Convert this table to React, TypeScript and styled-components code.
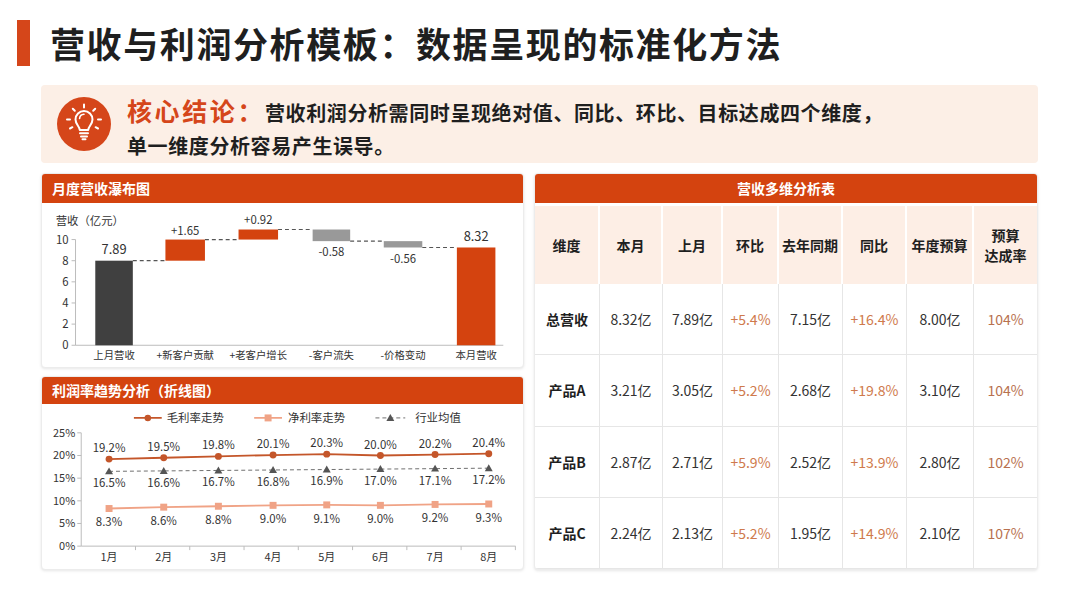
import React from "react"
import styled, { createGlobalStyle } from "styled-components"

const colors = {
  brand: "#d5461a",
  bar: "#d4430f",
  ink: "#1f1f1f",
  text: "#333333",
  peach: "#fcefe6",
  headPeach: "#fdeee5",
  line: "#e6e6e6",
  up: "#cf7a4c",
  rate: "#b8714f",
  gross: "#c4562a",
  net: "#f0a386",
  avg: "#6f6f6f",
}

const font = `"Noto Sans CJK SC", "Noto Sans", sans-serif`

const GlobalStyle = createGlobalStyle`
  * { box-sizing: border-box; }
  html, body { margin: 0; padding: 0; background: #fff; }
  body { font-family: ${font}; color: ${colors.ink}; }
`

const Page = styled.div`
  width: 1080px;
  height: 608px;
  overflow: hidden;
  padding-top: 20px;
  background: #fff;
`

const TitleRow = styled.header`
  display: flex;
  align-items: center;
  height: 46px;
  padding-left: 17px;
`

const TitleMark = styled.div`
  width: 13px;
  height: 46px;
  background: ${colors.brand};
`

const Title = styled.h1`
  margin: 0 0 0 20px;
  font-size: 35px;
  font-weight: 700;
  letter-spacing: 1.6px;
  color: ${colors.ink};
  line-height: 46px;
`

const Content = styled.main`
  padding: 19px 42px 0 41px;
`

const Callout = styled.div`
  display: flex;
  align-items: center;
  height: 78px;
  padding-left: 16px;
  background: ${colors.peach};
  border-radius: 4px;
`

const CalloutText = styled.p`
  margin: 0 0 0 16px;
  padding-top: 8px;
  font-size: 20px;
  font-weight: 700;
  line-height: 33px;
  letter-spacing: 0.6px;
  color: ${colors.ink};
`

const CalloutLead = styled.span`
  font-size: 25px;
  color: ${colors.brand};
  letter-spacing: 2.6px;
`

const Panels = styled.div`
  display: grid;
  grid-template-columns: 483px 1fr;
  gap: 10px;
  margin-top: 10px;
`

const Column = styled.div`
  display: flex;
  flex-direction: column;
  gap: 8px;
`

const Card = styled.section<{ $height: number }>`
  display: flex;
  flex-direction: column;
  height: ${(p) => p.$height}px;
  background: #fff;
  border: 1px solid #ececec;
  border-radius: 4px;
  box-shadow: 0 1px 3px rgba(0, 0, 0, 0.1);
  overflow: hidden;
`

const CardHeader = styled.h2<{ $center?: boolean; $height?: number }>`
  margin: 0;
  flex: none;
  height: ${(p) => p.$height ?? 28}px;
  line-height: ${(p) => p.$height ?? 28}px;
  padding: 0 10px;
  background: ${colors.bar};
  color: #fff;
  font-size: 14px;
  font-weight: 700;
  text-align: ${(p) => (p.$center ? "center" : "left")};
`

const ChartSvg = styled.svg`
  display: block;
  flex: 1;
  font-family: ${font};
`

const Table = styled.div`
  display: grid;
  grid-template-columns: 65px 63px 60px 56px 64px 64px 67px 1fr;
  grid-template-rows: 78px repeat(4, 1fr);
  flex: 1;
  margin-top: 3px;
`

const HeadCell = styled.div`
  display: flex;
  align-items: center;
  justify-content: center;
  text-align: center;
  background: ${colors.headPeach};
  border-right: 2px solid #fff;
  font-size: 14px;
  font-weight: 700;
  line-height: 20px;
  color: ${colors.ink};
  &:nth-child(8) { border-right: none; }
`

const Cell = styled.div<{ $tone?: "label" | "up" | "rate" }>`
  display: flex;
  align-items: center;
  justify-content: center;
  border-right: 1px solid ${colors.line};
  border-bottom: 1px solid ${colors.line};
  font-size: 14px;
  font-weight: ${(p) => (p.$tone === "label" ? 700 : 400)};
  color: ${(p) =>
    p.$tone === "up" ? colors.up : p.$tone === "rate" ? colors.rate : p.$tone === "label" ? colors.ink : colors.text};
  &:nth-child(8n) { border-right: none; }
`

const Bulb = () => (
  <svg width="54" height="54" viewBox="0 0 54 54">
    <circle cx="27" cy="27" r="27" fill={colors.brand} />
    <g fill="none" stroke="#fff" strokeWidth="2" strokeLinecap="round" strokeLinejoin="round">
      <path d="M22.8 33 C22.8 29.5 18.5 27.5 18.5 22.5 A8.5 8.5 0 0 1 35.5 22.5 C35.5 27.5 31.2 29.5 31.2 33 Z" />
      <path d="M23 36.2 H31 M24 39.4 H30 M25.5 42.2 H28.5" />
      <path d="M22.6 21.5 A4.6 4.6 0 0 1 27 17.2" strokeWidth="1.6" />
      <path d="M27 7.5 V10.5 M15.8 11.8 L17.8 13.8 M38.2 11.8 L36.2 13.8 M10 22.5 H13 M41 22.5 H44 M13 31.5 L15.4 30.2 M41 31.5 L38.6 30.2" />
    </g>
  </svg>
)

// ---- waterfall ----
const wf = {
  axisX: 31,
  base: 144,
  unit: 10.7,
}
const wy = (v: number) => wf.base - v * wf.unit

const wfBars = [
  { name: "上月营收", x: 51, w: 38, from: 0, to: 8, fill: "#404040", label: "7.89", ly: 52, big: true },
  { name: "+新客户贡献", x: 122, w: 40, from: 8, to: 10, fill: colors.bar, label: "+1.65", ly: 32 },
  { name: "+老客户增长", x: 196, w: 40, from: 10, to: 10.95, fill: colors.bar, label: "+0.92", ly: 21 },
  { name: "-客户流失", x: 271, w: 38, from: 9.85, to: 10.95, fill: "#999999", label: "-0.58", ly: 54 },
  { name: "-价格变动", x: 343, w: 39, from: 9.25, to: 9.85, fill: "#999999", label: "-0.56", ly: 61 },
  { name: "本月营收", x: 417, w: 39, from: 0, to: 9.25, fill: colors.bar, label: "8.32", ly: 38, big: true },
]

const Waterfall = () => (
  <ChartSvg width="481" height="166" viewBox="0 0 481 166">
    <text x="11" y="22" fontSize="11.5" fill={colors.text}>营收（亿元）</text>
    <line x1={wf.axisX} y1={wy(10)} x2={wf.axisX} y2={wf.base} stroke="#bbb" />
    <line x1={wf.axisX} y1={wf.base} x2={464} y2={wf.base} stroke="#bbb" />
    {[0, 2, 4, 6, 8, 10].map((v) => (
      <g key={v}>
        <line x1={wf.axisX - 4} y1={wy(v)} x2={wf.axisX} y2={wy(v)} stroke="#bbb" />
        <text x={wf.axisX - 7} y={wy(v) + 4} fontSize="11.5" textAnchor="end" fill={colors.text}>{v}</text>
      </g>
    ))}
    {wfBars.map((b, i) => {
      const next = wfBars[i + 1]
      const top = Math.max(b.from, b.to)
      const bottom = Math.min(b.from, b.to)
      const edge = i === 0 ? b.to : b.fill === "#999999" ? b.from : b.to
      return (
        <g key={b.name}>
          <rect x={b.x} y={wy(top)} width={b.w} height={wy(bottom) - wy(top)} fill={b.fill} />
          {next && (
            <line
              x1={b.x + b.w}
              y1={wy(edge)}
              x2={next.x}
              y2={wy(edge)}
              stroke="#555"
              strokeWidth="1.2"
              strokeDasharray="4 3"
            />
          )}
          <text x={b.x + b.w / 2} y={b.ly} fontSize={b.big ? 13 : 11.5} textAnchor="middle" fill={colors.text}>
            {b.label}
          </text>
          <text x={b.x + b.w / 2} y={158} fontSize="10.5" textAnchor="middle" fill={colors.text}>
            {b.name}
          </text>
        </g>
      )
    })}
  </ChartSvg>
)

// ---- line chart ----
const months = ["1月", "2月", "3月", "4月", "5月", "6月", "7月", "8月"]
const xs = [66, 121, 176, 231, 285, 339, 394, 448]
const gross = [19.2, 19.5, 19.8, 20.1, 20.3, 20.0, 20.2, 20.4]
const net = [8.3, 8.6, 8.8, 9.0, 9.1, 9.0, 9.2, 9.3]
const avg = [16.5, 16.6, 16.7, 16.8, 16.9, 17.0, 17.1, 17.2]
const ly = (v: number) => 143 - v * 4.56
const pts = (vals: number[]) => vals.map((v, i) => `${xs[i]},${ly(v)}`).join(" ")
const tri = (x: number, y: number) => `${x},${y - 4} ${x + 4},${y + 3} ${x - 4},${y + 3}`

const TrendChart = () => (
  <ChartSvg width="481" height="166" viewBox="0 0 481 166">
    <g fontSize="11.5" fill={colors.text}>
      <line x1="91" y1="14" x2="119" y2="14" stroke={colors.gross} strokeWidth="1.6" />
      <circle cx="105" cy="14" r="3.3" fill={colors.gross} />
      <text x="124" y="18">毛利率走势</text>
      <line x1="212" y1="14" x2="240" y2="14" stroke={colors.net} strokeWidth="1.6" />
      <rect x="222.5" y="10.5" width="7" height="7" fill={colors.net} />
      <text x="246" y="18">净利率走势</text>
      <line x1="334" y1="14" x2="364" y2="14" stroke={colors.avg} strokeWidth="1" strokeDasharray="4 3" />
      <polygon points={tri(349, 14)} fill="#555" />
      <text x="374" y="18">行业均值</text>
    </g>
    <line x1="38" y1={ly(25)} x2="38" y2={ly(0)} stroke="#bbb" />
    <line x1="38" y1={ly(0)} x2="475" y2={ly(0)} stroke="#bbb" />
    {[0, 5, 10, 15, 20, 25].map((v) => (
      <g key={v}>
        <line x1="34" y1={ly(v)} x2="38" y2={ly(v)} stroke="#bbb" />
        <text x="32" y={ly(v) + 4} fontSize="11" textAnchor="end" fill={colors.text}>{v}%</text>
      </g>
    ))}
    {months.map((m, i) => (
      <g key={m}>
        <line x1={38 + (i + 1) * 54.6} y1={ly(0)} x2={38 + (i + 1) * 54.6} y2={ly(0) + 4} stroke="#bbb" />
        <text x={xs[i]} y="158" fontSize="11" textAnchor="middle" fill={colors.text}>{m}</text>
      </g>
    ))}
    <polyline points={pts(avg)} fill="none" stroke={colors.avg} strokeWidth="1" strokeDasharray="4 3" />
    <polyline points={pts(gross)} fill="none" stroke={colors.gross} strokeWidth="1.8" />
    <polyline points={pts(net)} fill="none" stroke={colors.net} strokeWidth="1.8" />
    {xs.map((x, i) => (
      <g key={x} fontSize="11.5" textAnchor="middle" fill={colors.text}>
        <polygon points={tri(x, ly(avg[i]))} fill="#555" />
        <circle cx={x} cy={ly(gross[i])} r="3.5" fill={colors.gross} />
        <rect x={x - 3.5} y={ly(net[i]) - 3.5} width="7" height="7" fill={colors.net} />
        <text x={x} y={ly(gross[i]) - 7}>{gross[i].toFixed(1)}%</text>
        <text x={x} y={ly(avg[i]) + 16}>{avg[i].toFixed(1)}%</text>
        <text x={x} y={ly(net[i]) + 18}>{net[i].toFixed(1)}%</text>
      </g>
    ))}
  </ChartSvg>
)

// ---- table ----
const heads = ["维度", "本月", "上月", "环比", "去年同期", "同比", "年度预算", "预算\n达成率"]
const rows = [
  ["总营收", "8.32亿", "7.89亿", "+5.4%", "7.15亿", "+16.4%", "8.00亿", "104%"],
  ["产品A", "3.21亿", "3.05亿", "+5.2%", "2.68亿", "+19.8%", "3.10亿", "104%"],
  ["产品B", "2.87亿", "2.71亿", "+5.9%", "2.52亿", "+13.9%", "2.80亿", "102%"],
  ["产品C", "2.24亿", "2.13亿", "+5.2%", "1.95亿", "+14.9%", "2.10亿", "107%"],
]
const toneFor = (col: number) =>
  col === 0 ? "label" : col === 3 || col === 5 ? "up" : col === 7 ? "rate" : undefined

const App = () => (
  <Page>
    <GlobalStyle />
    <TitleRow>
      <TitleMark />
      <Title>营收与利润分析模板：数据呈现的标准化方法</Title>
    </TitleRow>
    <Content>
      <Callout>
        <Bulb />
        <CalloutText>
          <CalloutLead>核心结论：</CalloutLead>营收利润分析需同时呈现绝对值、同比、环比、目标达成四个维度，
          <br />
          单一维度分析容易产生误导。
        </CalloutText>
      </Callout>
      <Panels>
        <Column>
          <Card $height={195}>
            <CardHeader $height={29}>月度营收瀑布图</CardHeader>
            <Waterfall />
          </Card>
          <Card $height={194}>
            <CardHeader $height={27}>利润率趋势分析（折线图）</CardHeader>
            <TrendChart />
          </Card>
        </Column>
        <Card $height={397}>
          <CardHeader $center $height={29}>营收多维分析表</CardHeader>
          <Table>
            {heads.map((h) => (
              <HeadCell key={h}>
                {h.split("\n").map((part, i) => (
                  <React.Fragment key={part}>
                    {i > 0 && <br />}
                    {part}
                  </React.Fragment>
                ))}
              </HeadCell>
            ))}
            {rows.map((r) =>
              r.map((v, c) => (
                <Cell key={`${r[0]}-${c}`} $tone={toneFor(c)}>
                  {v}
                </Cell>
              ))
            )}
          </Table>
        </Card>
      </Panels>
    </Content>
  </Page>
)

export default App
